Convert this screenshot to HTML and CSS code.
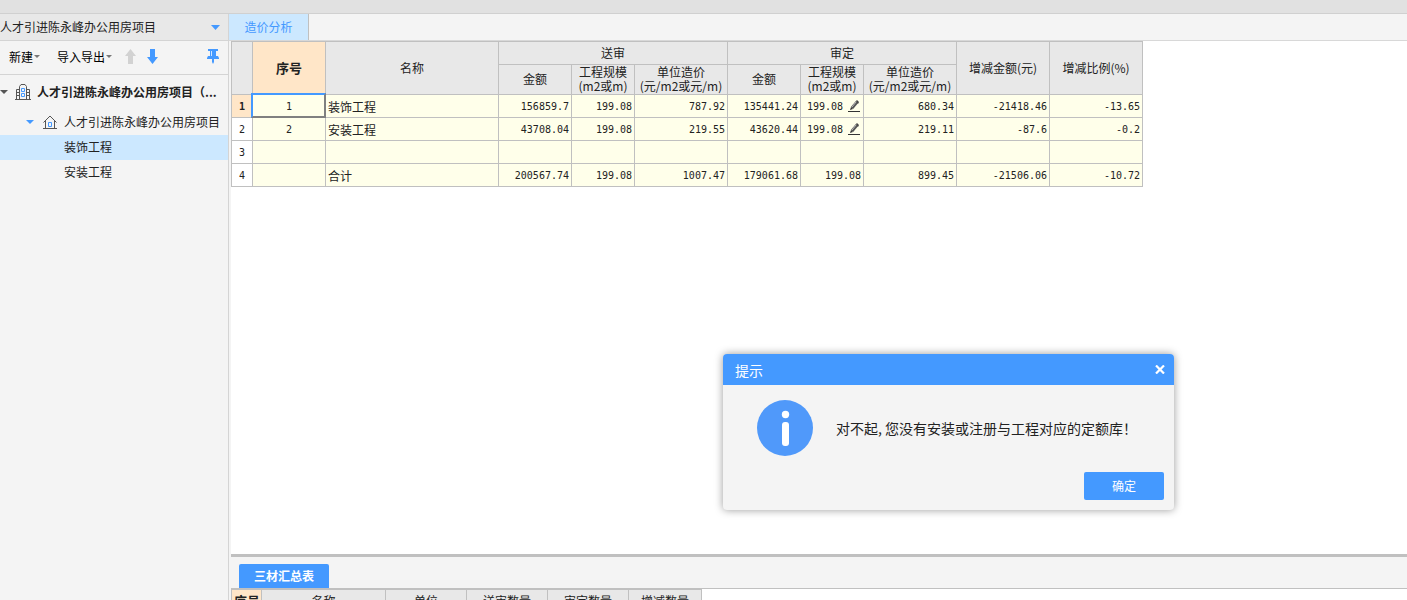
FILE: index.html
```html
<!DOCTYPE html>
<html lang="zh-CN">
<head>
<meta charset="utf-8">
<title>造价分析</title>
<link rel="stylesheet" href="styles.css">
</head>
<body>
<div class="app">
  <div class="topbar"></div>
  <div class="body">
    <aside class="sidebar">
      <div class="project">
        <select class="project-select" aria-label="项目">
          <option>人才引进陈永峰办公用房项目</option>
        </select>
        <svg class="project-arrow" width="9" height="5" viewBox="0 0 9 5"><path d="M0 0h9L4.500 5z" fill="#4499ff"/></svg>
      </div>
      <div class="toolbar">
        <button class="tool" type="button">新建<svg width="6" height="3" viewBox="0 0 6 3"><path d="M0 0h6L3 3z" fill="#777"/></svg></button>
        <button class="tool" type="button">导入导出<svg width="6" height="3" viewBox="0 0 6 3"><path d="M0 0h6L3 3z" fill="#777"/></svg></button>
        <button class="tool" type="button" aria-label="上移"><svg width="11" height="15" viewBox="0 0 11 15"><path d="M5.500 0L11 7H8v8H3V7H0z" fill="#d2d2d2"/></svg></button>
        <button class="tool" type="button" aria-label="下移"><svg width="11" height="15" viewBox="0 0 11 15"><path d="M5.500 15L11 8H8V0H3v8H0z" fill="#4499ff"/></svg></button>
        <button class="tool pin" type="button" aria-label="固定"><svg width="12" height="15" viewBox="0 0 12 15"><path d="M1 0h10v2H9v5h2l1 2v1H7v3l-1 2-1-2v-3H0V9l1-2h2V2H1z" fill="#4499ff"/><path d="M4.500 2v5" stroke="#cfe5ff"/></svg></button>
      </div>
      <ul class="tree">
        <li><button class="node root" type="button"><svg width="8" height="4" viewBox="0 0 8 4"><path d="M0 0h8L4 4z" fill="#555"/></svg><svg class="building" width="16" height="16" viewBox="0 0 16 16" fill="none"><path d="M4.500 15V2.500L6 .5h4l1.500 2V15M4.500 5.500h-3V15M11.500 5.500h3V15M0 15.500h16M1.500 8.500h3M1.500 11.500h3M11.500 8.500h3M11.500 11.500h3" stroke="#555"/><path d="M6.500 4.500h3v3h-3zM6.500 9.500h3v3h-3z" stroke="#4499ff"/></svg><span>人才引进陈永峰办公用房项目（...</span></button></li>
        <li><button class="node child" type="button"><svg width="8" height="4" viewBox="0 0 8 4"><path d="M0 0h8L4 4z" fill="#4499ff"/></svg><svg class="house" width="14" height="14" viewBox="0 0 14 14" fill="none"><path d="M.5 7.500L7 1l6.500 6.500M2.500 6v7.500M11.500 6v7.500M0 13.500h14" stroke="#555"/><path d="M5.500 7.500h3v4h-3z" stroke="#4499ff"/></svg><span>人才引进陈永峰办公用房项目</span></button></li>
        <li><button class="node leaf selected" type="button">装饰工程</button></li>
        <li><button class="node leaf" type="button">安装工程</button></li>
      </ul>
    </aside>
    <main class="main">
      <nav class="tabs"><button class="tab" type="button">造价分析</button></nav>
      <section class="sheet">
        <table class="grid">
          <colgroup><col class="w-num"><col class="w-amount"><col class="w-name"><col class="w-amount"><col class="w-scale"><col class="w-unit"><col class="w-amount"><col class="w-scale"><col class="w-unit"><col class="w-unit"><col class="w-unit"></colgroup>
          <thead>
            <tr class="group"><th rowspan="2"></th><th rowspan="2" class="current">序号</th><th rowspan="2">名称</th><th colspan="3">送审</th><th colspan="3">审定</th><th rowspan="2">增减金额(元)</th><th rowspan="2">增减比例(%)</th></tr>
            <tr class="sub"><th>金额</th><th>工程规模<br>(m2或m)</th><th>单位造价<br>(元/m2或元/m)</th><th>金额</th><th>工程规模<br>(m2或m)</th><th>单位造价<br>(元/m2或元/m)</th></tr>
          </thead>
          <tbody>
            <tr><th class="current">1</th><td class="order active">1</td><td class="name">装饰工程</td><td>156859.7</td><td>199.08</td><td>787.92</td><td>135441.24</td><td><div class="editable">199.08<button class="edit" type="button" aria-label="编辑"><svg width="12" height="12" viewBox="0 0 12 12"><path d="M0 11.500h12" stroke="#333"/><path d="M4 8l5-6" stroke="#555" stroke-width="3"/><path d="M4 7l4-5" stroke="#bbb"/><path d="M2 10l1-3 2 2z" fill="#333"/><path d="M8 1l1-1 2 2-1 2z" fill="#444"/></svg></button></div></td><td>680.34</td><td>-21418.46</td><td>-13.65</td></tr>
            <tr><th>2</th><td class="order">2</td><td class="name">安装工程</td><td>43708.04</td><td>199.08</td><td>219.55</td><td>43620.44</td><td><div class="editable">199.08<button class="edit" type="button" aria-label="编辑"><svg width="12" height="12" viewBox="0 0 12 12"><path d="M0 11.500h12" stroke="#333"/><path d="M4 8l5-6" stroke="#555" stroke-width="3"/><path d="M4 7l4-5" stroke="#bbb"/><path d="M2 10l1-3 2 2z" fill="#333"/><path d="M8 1l1-1 2 2-1 2z" fill="#444"/></svg></button></div></td><td>219.11</td><td>-87.6</td><td>-0.2</td></tr>
            <tr><th>3</th><td></td><td></td><td></td><td></td><td></td><td></td><td></td><td></td><td></td><td></td></tr>
            <tr><th>4</th><td></td><td class="name">合计</td><td>200567.74</td><td>199.08</td><td>1007.47</td><td>179061.68</td><td>199.08</td><td>899.45</td><td>-21506.06</td><td>-10.72</td></tr>
          </tbody>
        </table>
      </section>
      <section class="summary">
        <div class="summary-tabs"><button class="summary-tab" type="button">三材汇总表</button></div>
        <div class="summary-body">
          <table class="materials">
            <colgroup><col class="m-order"><col class="m-name"><col class="m-unit"><col class="m-unit"><col class="m-unit"><col class="m-last"></colgroup>
            <thead><tr><th class="current">序号</th><th>名称</th><th>单位</th><th>送审数量</th><th>审定数量</th><th>增减数量</th></tr></thead>
          </table>
        </div>
      </section>
    </main>
  </div>
  <div class="dialog" role="dialog" aria-labelledby="dialog-title">
    <header class="dialog-head"><span id="dialog-title">提示</span>
      <button class="close" type="button" aria-label="关闭"><svg width="10" height="9" viewBox="0 0 10 9"><path d="M1 .5l8 8M9 .5l-8 8" stroke="#fff" stroke-width="2.200"/></svg></button></header>
    <div class="dialog-body">
      <svg width="56" height="56" viewBox="0 0 56 56"><circle cx="28" cy="28" r="28" fill="#5099fa"/><circle cx="28.500" cy="14.500" r="3.700" fill="#fff"/><rect x="25" y="22" width="7" height="24" rx="3" fill="#fff"/></svg>
      <p>对不起, 您没有安装或注册与工程对应的定额库！</p>
    </div>
    <footer class="dialog-foot"><button class="ok" type="button">确定</button></footer>
  </div>
</div>
</body>
</html>
```
FILE: styles.css
```css
* { box-sizing: border-box; }
body { margin: 0; font: 12px/16px "Noto Sans CJK SC", sans-serif; color: #222; }
button, select { font: inherit; color: inherit; border: 0; padding: 0; margin: 0; background: none; }
svg { display: block; flex: none; }
.app { display: flex; flex-direction: column; height: 100vh; overflow: hidden; background: #f4f4f4; }
.topbar { flex: none; height: 14px; background: #e1e1e1; border-bottom: 1px solid #d0d0d0; }
.body { display: flex; flex: 1; min-height: 0; }

.sidebar { flex: none; width: 229px; border-right: 1px solid #d4d4d4; }
.project { display: flex; align-items: center; height: 27px; padding-right: 8px; background: #e8e8e8; border-bottom: 1px solid #d4d4d4; }
.project-select { flex: 1; height: 26px; appearance: none; outline: 0; }
.project-arrow { pointer-events: none; }
.toolbar { display: flex; align-items: center; gap: 11px; height: 34px; padding: 0 9px 2px 9px; border-bottom: 1px solid #d4d4d4; color: #000; }
.tool { display: flex; align-items: center; gap: 1px; }
.tool:nth-child(2) { margin: 0 2px 0 6px; }
.pin { margin-left: auto; }
.tree { list-style: none; margin: 0; padding: 0; }
.node { display: flex; align-items: center; width: 100%; height: 25px; padding-bottom: 1px; text-align: left; white-space: nowrap; }
.root { height: 35px; gap: 7px; font-weight: 700; }
.root .building { margin-right: -1px; }
.child { padding-left: 26px; gap: 8px; }
.child .house { margin: 0 -1px 0 1px; }
.leaf { padding-left: 64px; }
.selected { background: #cce8ff; }

.main { display: flex; flex: 1; flex-direction: column; min-width: 0; }
.tabs { display: flex; flex: none; height: 27px; border-bottom: 1px solid #d8d8d8; }
.tab { width: 80px; background: #cce8ff; color: #4499ff; border-right: 1px solid #c0c0c0; }
.sheet { flex: 1; min-height: 0; margin-left: 2px; background: #fff; }

table { table-layout: fixed; border-collapse: separate; border-spacing: 0; border: solid #c0c0c0; border-width: 1px 0 0 1px; }
th, td { padding: 0 2px; border: solid #c0c0c0; border-width: 0 1px 1px 0; white-space: nowrap; }
th { background: #e8e8e8; font-weight: 400; }
.grid { width: 912px; }
.w-num { width: 21px; }
.w-amount { width: 73px; }
.w-name { width: 173px; }
.w-scale { width: 63px; }
.w-unit { width: 93px; }
.grid .group { height: 23px; }
.grid .sub { height: 30px; line-height: 14px; }
.grid .sub th { padding-bottom: 1px; }
.grid tbody tr { height: 23px; }
.grid tbody th, td { padding-top: 2px; font-family: "DejaVu Sans Mono", monospace; font-size: 10px; line-height: 16px; }
.grid tbody th { background: #fff; }
td { background: #ffffea; text-align: right; }
td.order { text-align: center; }
td.name { text-align: left; font-family: "Noto Sans CJK SC", sans-serif; font-size: 12px; }
.grid .current, .materials .current { background: #ffe6c8; font-weight: 700; }
thead .current { font-size: 13px; }
.active { position: relative; }
.active::after { content: ""; position: absolute; inset: -2px -1px -1px -2px; border: 2px solid; border-color: #4499ff #808080 #808080 #4499ff; }
.editable { display: flex; align-items: center; justify-content: flex-end; gap: 5px; }
.edit { padding: 0 1px 3px 0; }

.summary { flex: none; height: 46px; margin-left: 2px; overflow: hidden; border-top: 3px solid #c0c0c0; }
.summary-tabs { display: flex; align-items: flex-end; height: 32px; padding-left: 8px; border-bottom: 1px solid #c0c0c0; }
.summary-tab { width: 90px; height: 24px; border-radius: 2px 2px 0 0; background: #4499ff; color: #fff; font-weight: 700; }
.summary-body { background: #fff; }
.materials { width: 471px; }
.materials th { height: 23px; }
.m-order { width: 30px; }
.m-name { width: 124px; }
.m-unit { width: 81px; }
.m-last { width: 73px; }

.dialog { position: absolute; left: 723px; top: 354px; width: 451px; border-radius: 4px; background: #f4f4f4; box-shadow: 0 0 8px rgba(0, 0, 0, .4); overflow: hidden; }
.dialog-head { display: flex; align-items: center; justify-content: space-between; height: 31px; padding: 0 9px 0 12px; background: #4499ff; color: #fff; font-size: 14px; }
.close { display: flex; }
.dialog-body { display: flex; align-items: center; gap: 23px; padding: 15px 34px; font-size: 14px; }
.dialog-body p { margin: 0; white-space: nowrap; }
.dialog-foot { display: flex; justify-content: flex-end; padding: 1px 10px 10px; }
.ok { width: 80px; height: 28px; border-radius: 2px; background: #4499ff; color: #fff; }
```
